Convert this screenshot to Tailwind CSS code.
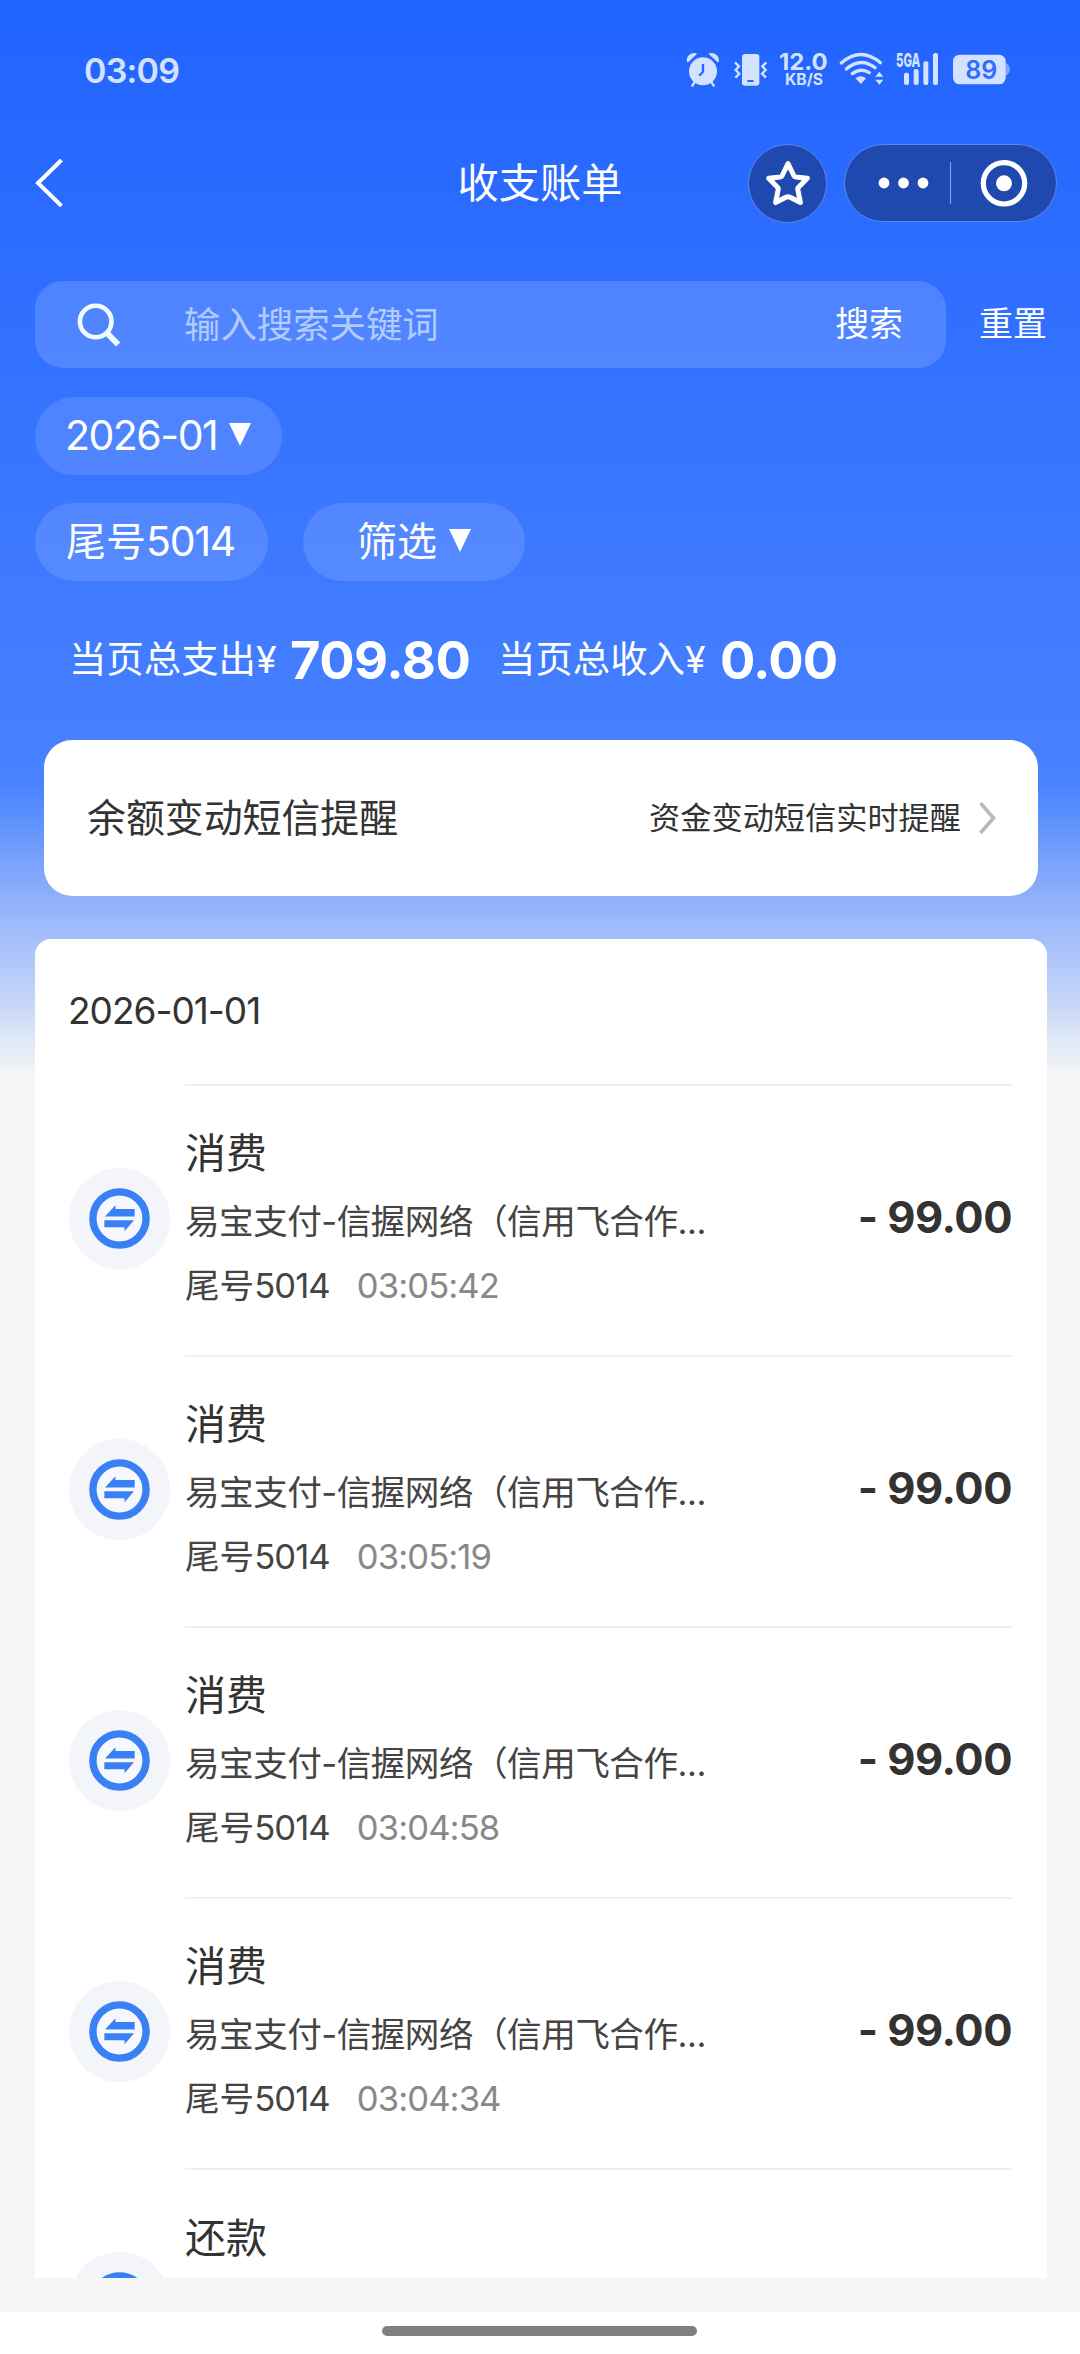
<!DOCTYPE html>
<html lang="zh-CN">
<head>
<meta charset="utf-8">
<title>收支账单</title>
<script src="https://cdn.jsdelivr.net/npm/@tailwindcss/browser@4"></script>
</head>
<body class="w-[1080px] h-[2354px] overflow-hidden bg-white font-['Inter','Noto_Sans_CJK_SC',sans-serif] text-[#333]">
<svg class="hidden">
  <symbol id="transfer" viewBox="0 0 300 300">
    <circle cx="150" cy="150" r="150" fill="#f3f5fb"/>
    <circle cx="150" cy="150" r="79" fill="#f6f8fd" stroke="#3880f3" stroke-width="22"/>
    <path d="M107 144L138 111V122H195V144ZM105 155H193L165 188V176H105Z" fill="#3880f3"/>
  </symbol>
</svg>
<main class="h-[2312px] overflow-hidden flex flex-col bg-[#f6f6f6] bg-[linear-gradient(180deg,#2163ff_0px,#2c6cff_230px,#3f7aff_590px,#4680ff_740px,#4983ff_785px,#8eb0f9_896px,#a2bdfb_935px,#c8d7f9_1005px,#dfe8f6_1040px,#f6f6f6_1078px)]">
  <!-- status bar -->
  <header class="h-[140px] shrink-0 flex items-center justify-between pl-[84px] pr-10 text-[#d3e2ff]">
    <span class="text-[34px] font-semibold tracking-[-0.800px]">03:09</span>
    <svg class="w-[380px] h-20" viewBox="0 0 1140 240" fill="#d3e2ff">
      <path d="M83 95C79 80 94 68 108 72ZM174 95C178 80 163 68 149 72Z" stroke="#d3e2ff" stroke-width="4" stroke-linejoin="round"/>
      <circle cx="129" cy="124" r="42"/>
      <path d="M105 155L97 167M153 155L161 167" stroke="#d3e2ff" stroke-width="7" stroke-linecap="round"/>
      <path d="M129 102V125L118 137" fill="none" stroke="#2566ff" stroke-width="7"/>
      <rect x="246" y="72" width="52" height="95" rx="9"/>
      <rect x="262" y="150" width="19" height="6" fill="#2566ff"/>
      <path d="M225 97L237 109L227 120L238 131L226 143M319 97L307 109L317 120L306 131L318 143" fill="none" stroke="#d3e2ff" stroke-width="7"/>
      <text x="357" y="121" font-size="70" font-weight="700" textLength="146" lengthAdjust="spacingAndGlyphs">12.0</text>
      <text x="375" y="164" font-size="46" font-weight="700" textLength="114" lengthAdjust="spacingAndGlyphs">KB/S</text>
      <g fill="none" stroke="#d3e2ff" stroke-width="10" stroke-linecap="round">
        <path d="M544 99Q602 49 661 98"/><path d="M559 117Q602 80 645 113"/><path d="M577 131Q602 112 628 128"/>
      </g>
      <path d="M586 145Q602 133 618 145L603 162ZM646 140L658 125L670 140ZM646 149H670L658 164Z"/>
      <text x="708" y="111" font-size="58" font-weight="800" textLength="73" lengthAdjust="spacingAndGlyphs">5GA</text>
      <rect x="732" y="128" width="15" height="37" rx="6"/><rect x="761" y="117" width="15" height="48" rx="6"/><rect x="790" y="94" width="15" height="71" rx="6"/><rect x="819" y="69" width="15" height="96" rx="6"/>
      <path d="M1030 95Q1050 103 1050 118T1030 141Z" fill="#7ba5ff"/>
      <rect x="879" y="74" width="158" height="89" rx="20"/>
      <text x="916" y="146" font-size="76" font-weight="600" fill="#2f6cff" textLength="96" lengthAdjust="spacingAndGlyphs">89</text>
    </svg>
  </header>
  <!-- navigation -->
  <nav class="h-[86px] shrink-0 grid grid-cols-3 items-center text-white">
    <svg class="w-8 h-12 ml-[33px]" viewBox="0 0 32 48" fill="none" stroke="#fff" stroke-width="4"><path d="M28.500 1L5 24L28.500 47"/></svg>
    <h1 class="text-[41.200px] leading-[60px] text-center">收支账单</h1>
    <div class="flex justify-end gap-[17px] pr-[23px]">
      <span class="size-[79px] rounded-full bg-[#1f49ae] border border-[#5b86ea] grid place-items-center">
        <svg class="w-[46px] h-[48px]" viewBox="0 0 46 48" fill="none" stroke="#fff" stroke-width="5" stroke-linejoin="round"><path d="M23 4.500L28.800 16.500Q29.300 17.700 30.600 17.900L42.300 19.300L33.300 28.400Q32.600 29.200 32.800 30.400L35.400 43.600L24.600 38.100Q23 37.400 21.400 38.100L10.600 43.600L13.200 30.400Q13.400 29.200 12.700 28.400L3.700 19.300L15.400 17.900Q16.700 17.700 17.200 16.500Z"/></svg>
      </span>
      <span class="w-[213px] h-[78px] rounded-full bg-[#1f49ae] border border-[#5b86ea] flex items-center">
        <svg class="w-[211px] h-[76px]" viewBox="0 0 211 76" fill="#fff"><circle cx="39" cy="38" r="5.400"/><circle cx="58.500" cy="38" r="5.400"/><circle cx="78" cy="38" r="5.400"/><path d="M105.500 17V59" stroke="#7f9fe8" stroke-width="1.200"/><circle cx="159" cy="38.300" r="20.700" fill="none" stroke="#fff" stroke-width="5.200"/><circle cx="159" cy="38.300" r="8"/></svg>
      </span>
    </div>
  </nav>
  <!-- search -->
  <div class="mt-[55px] h-[87px] shrink-0 flex items-center pl-[35px] text-white text-[33.900px]">
    <div class="w-[911px] h-full rounded-[28px] bg-white/15 flex items-center pl-[41px] pr-[43px]">
      <svg class="size-[48px]" viewBox="0 0 48 48" fill="none" stroke="#f2fbff" stroke-width="4.600"><circle cx="19.700" cy="20.500" r="15.800"/><path d="M30.500 31.500L42.200 43.500" stroke-width="6"/></svg>
      <span class="ml-[60px] pt-0.5 flex-1 text-[36.400px] text-[#b3cbff]">输入搜索关键词</span>
      <span>搜索</span>
    </div>
    <span class="ml-[33px]">重置</span>
  </div>
  <!-- filters -->
  <div class="mt-[29px] shrink-0 pl-[35px] flex flex-col gap-7 text-white text-[40px]">
    <div class="w-[247px] h-[78px] rounded-full bg-white/12 flex items-center pl-[30px]">
      <span class="w-[164px] text-[41px] tracking-[-1.500px]">2026-01</span>
      <svg class="w-[22px] h-[23px] mb-1" viewBox="0 0 22 23" fill="#fff"><path d="M0 0H22L11 23Z"/></svg>
    </div>
    <div class="flex gap-[35px]">
      <div class="w-[233px] h-[78px] rounded-full bg-white/12 flex items-center pl-[31px] whitespace-nowrap"><span>尾号</span><span class="text-[41px] tracking-[-1.200px]">5014</span></div>
      <div class="w-[222px] h-[78px] rounded-full bg-white/12 flex items-center pl-[54px]">
        <span class="w-[92px]">筛选</span>
        <svg class="w-[22px] h-[23px] mb-1" viewBox="0 0 22 23" fill="#fff"><path d="M0 0H22L11 23Z"/></svg>
      </div>
    </div>
  </div>
  <!-- totals -->
  <div class="mt-[39px] h-20 shrink-0 flex items-center pl-[69px] text-white text-[37.400px] whitespace-nowrap">
    <span class="w-[221px]">当页总支出¥</span><b class="w-[208px] text-[52.500px] font-bold tracking-[-0.500px]">709.80</b>
    <span class="w-[222px]">当页总收入¥</span><b class="text-[52.500px] font-bold tracking-[-0.800px]">0.00</b>
  </div>
  <!-- SMS reminder -->
  <div class="mt-10 ml-11 w-[994px] h-[156px] shrink-0 bg-white rounded-[28px] flex items-center pl-[43px] pr-[42px] text-[#333]">
    <span class="flex-1 text-[38.900px]">余额变动短信提醒</span>
    <span class="text-[31.200px]">资金变动短信实时提醒</span>
    <svg class="ml-[18px] w-[17px] h-8" viewBox="0 0 17 32" fill="none" stroke="#b9b9b9" stroke-width="3.600"><path d="M1.500 1L14.500 16L1.500 31"/></svg>
  </div>
  <!-- transactions -->
  <section class="mt-[43px] mx-[35px] w-[1012px] h-[1339px] shrink-0 bg-white rounded-t-[16px] overflow-hidden">
    <h2 class="h-[144px] mb-px flex items-center pl-[33px] text-[37px] tracking-[-1px]">2026-01-01</h2>
    <article class="h-[271px] pl-[34px] pr-[35px] flex">
      <svg class="size-[101px] mt-[84px] mr-[15px] shrink-0"><use href="#transfer"/></svg>
      <div class="flex-1 flex items-center border-t-2 border-[#f0f0f0]">
        <div class="flex-1 self-start pt-[33px]">
          <p class="h-[68px] leading-[68px] text-[41px]">消费</p>
          <p class="h-[68px] leading-[68px] text-[34.600px] tracking-[-0.500px] text-[#444]">易宝支付-信握网络（信用飞合作...</p>
          <p class="h-[60px] leading-[60px] text-[34.600px] text-[#444]">尾号<span class="tracking-[-0.900px]">5014</span><span class="ml-[27px] tracking-[-0.900px] text-[#888]">03:05:42</span></p>
        </div>
        <b class="text-[43.500px] font-bold tracking-[-0.500px] pb-[5px]">- 99.00</b>
      </div>
    </article>
    <article class="h-[271px] pl-[34px] pr-[35px] flex">
      <svg class="size-[101px] mt-[84px] mr-[15px] shrink-0"><use href="#transfer"/></svg>
      <div class="flex-1 flex items-center border-t-2 border-[#f0f0f0]">
        <div class="flex-1 self-start pt-[33px]">
          <p class="h-[68px] leading-[68px] text-[41px]">消费</p>
          <p class="h-[68px] leading-[68px] text-[34.600px] tracking-[-0.500px] text-[#444]">易宝支付-信握网络（信用飞合作...</p>
          <p class="h-[60px] leading-[60px] text-[34.600px] text-[#444]">尾号<span class="tracking-[-0.900px]">5014</span><span class="ml-[27px] tracking-[-0.900px] text-[#888]">03:05:19</span></p>
        </div>
        <b class="text-[43.500px] font-bold tracking-[-0.500px] pb-[5px]">- 99.00</b>
      </div>
    </article>
    <article class="h-[271px] pl-[34px] pr-[35px] flex">
      <svg class="size-[101px] mt-[84px] mr-[15px] shrink-0"><use href="#transfer"/></svg>
      <div class="flex-1 flex items-center border-t-2 border-[#f0f0f0]">
        <div class="flex-1 self-start pt-[33px]">
          <p class="h-[68px] leading-[68px] text-[41px]">消费</p>
          <p class="h-[68px] leading-[68px] text-[34.600px] tracking-[-0.500px] text-[#444]">易宝支付-信握网络（信用飞合作...</p>
          <p class="h-[60px] leading-[60px] text-[34.600px] text-[#444]">尾号<span class="tracking-[-0.900px]">5014</span><span class="ml-[27px] tracking-[-0.900px] text-[#888]">03:04:58</span></p>
        </div>
        <b class="text-[43.500px] font-bold tracking-[-0.500px] pb-[5px]">- 99.00</b>
      </div>
    </article>
    <article class="h-[271px] pl-[34px] pr-[35px] flex">
      <svg class="size-[101px] mt-[84px] mr-[15px] shrink-0"><use href="#transfer"/></svg>
      <div class="flex-1 flex items-center border-t-2 border-[#f0f0f0]">
        <div class="flex-1 self-start pt-[33px]">
          <p class="h-[68px] leading-[68px] text-[41px]">消费</p>
          <p class="h-[68px] leading-[68px] text-[34.600px] tracking-[-0.500px] text-[#444]">易宝支付-信握网络（信用飞合作...</p>
          <p class="h-[60px] leading-[60px] text-[34.600px] text-[#444]">尾号<span class="tracking-[-0.900px]">5014</span><span class="ml-[27px] tracking-[-0.900px] text-[#888]">03:04:34</span></p>
        </div>
        <b class="text-[43.500px] font-bold tracking-[-0.500px] pb-[5px]">- 99.00</b>
      </div>
    </article>
    <article class="h-[271px] pl-[34px] pr-[35px] flex">
      <svg class="size-[101px] mt-[84px] mr-[15px] shrink-0"><use href="#transfer"/></svg>
      <div class="flex-1 border-t-2 border-[#f0f0f0] pt-[34px]">
        <p class="h-[68px] leading-[68px] text-[41px]">还款</p>
      </div>
    </article>
  </section>
</main>
<!-- home indicator -->
<footer class="h-[42px] flex pl-[382px] pt-[14px]"><div class="w-[315px] h-[10px] rounded-full bg-[#808080]"></div></footer>
</body>
</html>
